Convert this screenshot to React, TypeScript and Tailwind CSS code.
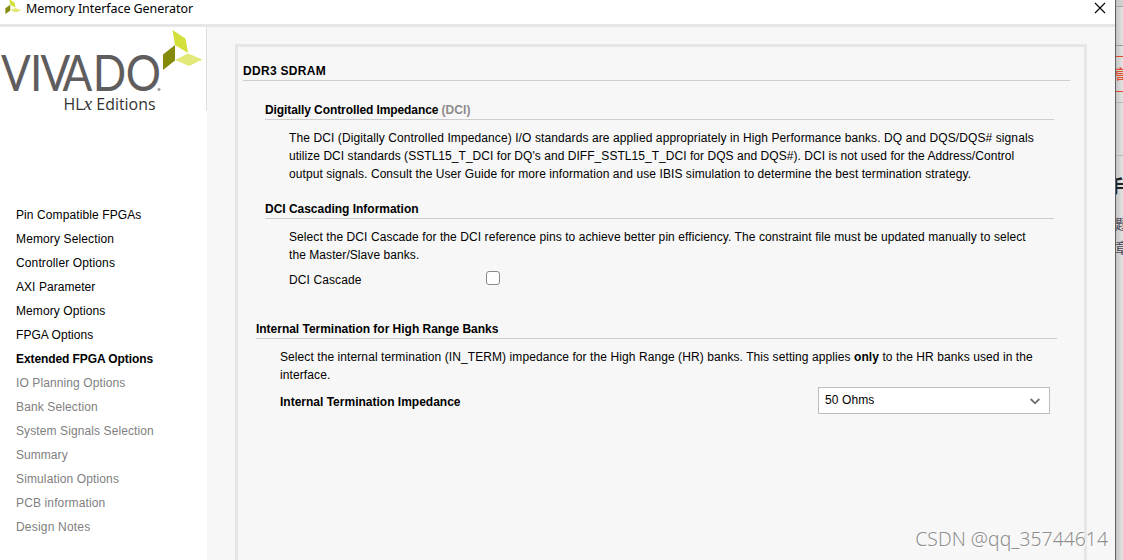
import { ReactNode } from 'react';
import clsx from 'clsx';

const steps = [
  { label: 'Pin Compatible FPGAs', state: 'done', tracking: 'tracking-[0.1px]' },
  { label: 'Memory Selection', state: 'done', tracking: 'tracking-[0.13px]' },
  { label: 'Controller Options', state: 'done', tracking: 'tracking-[0.13px]' },
  { label: 'AXI Parameter', state: 'done', tracking: 'tracking-[0.05px]' },
  { label: 'Memory Options', state: 'done', tracking: 'tracking-[0.1px]' },
  { label: 'FPGA Options', state: 'done', tracking: 'tracking-[0.05px]' },
  { label: 'Extended FPGA Options', state: 'current', tracking: 'tracking-[-0.09px]' },
  { label: 'IO Planning Options', state: 'todo', tracking: 'tracking-[0.1px]' },
  { label: 'Bank Selection', state: 'todo', tracking: 'tracking-[0.13px]' },
  { label: 'System Signals Selection', state: 'todo', tracking: 'tracking-[0.1px]' },
  { label: 'Summary', state: 'todo', tracking: 'tracking-[0.05px]' },
  { label: 'Simulation Options', state: 'todo', tracking: 'tracking-[0.13px]' },
  { label: 'PCB information', state: 'todo', tracking: 'tracking-[0.13px]' },
  { label: 'Design Notes', state: 'todo', tracking: 'tracking-[0.2px]' },
];

// Three-blade mark, used in the title bar and next to the wordmark
const Blades = () => (
  <>
    <path d="M172.5 30 L185.5 38.5 L188 53 L175 45 Z" fill="#d3e03a" />
    <path d="M163 54.5 L175 45 L175 60.5 L163 70 Z" fill="#858a0b" />
    <path d="M175 60 L188 53.5 L202.5 59.5 L189 66 Z" fill="#e2e978" />
  </>
);

const TitleBar = () => (
  <div className="flex h-[27px] shrink-0 items-start border-b-[3px] border-[#e6e6e6] bg-white">
    <svg width="17" height="14" viewBox="162 32 42 38" preserveAspectRatio="none" className="ml-[5px]">
      <Blades />
    </svg>
    <span className="ml-1 font-['Noto_Sans','Open_Sans',sans-serif] text-[12.5px] leading-[18px] tracking-[-0.07px]">
      Memory Interface Generator
    </span>
    <svg width="12" height="12" viewBox="0 0 12 12" className="mt-[2px] mr-[9px] ml-auto" stroke="#000" strokeWidth="1.1">
      <path d="M1 1 L11 11 M11 1 L1 11" />
    </svg>
  </div>
);

const Logo = () => (
  <svg width="206" height="84" viewBox="0 27 206 84" className="block shrink-0">
    <Blades />
    <text x="1.1 34 46 71 105.5 143" y="91" transform="scale(0.88 1)" fontFamily="Lato, sans-serif" fontSize="50" fill="#5f5d5e">
      VIVADO
    </text>
    <circle cx="159" cy="89.5" r="1.2" fill="#b0b0b0" stroke="#8a8a8a" strokeWidth="0.6" />
    <text x="63.5" y="110" fontFamily="'Open Sans', sans-serif" fontSize="15.5" fill="#333" textLength="92" lengthAdjust="spacingAndGlyphs">
      HL<tspan fontFamily="'Liberation Serif', serif" fontStyle="italic" fontSize="19">x</tspan> Editions
    </text>
  </svg>
);

const Sidebar = () => (
  <div className="flex w-[207px] shrink-0 flex-col bg-white">
    <div className="border-r border-[#dedede]">
      <Logo />
    </div>
    <ul className="mt-[92px] ml-4">
      {steps.map((step) => (
        <li
          key={step.label}
          className={clsx(
            'h-6 leading-6 whitespace-nowrap',
            step.tracking,
            step.state === 'current' && 'font-bold',
            step.state === 'todo' && 'text-[#808080]',
          )}
        >
          {step.label}
        </li>
      ))}
    </ul>
  </div>
);

const Heading = ({ children, className }: { children: ReactNode; className?: string }) => (
  <h2 className={clsx('h-5 border-b border-[#cdcdcd] leading-5 font-bold', className)}>{children}</h2>
);

const Line = ({ children, className }: { children: ReactNode; className?: string }) => (
  <div className={clsx('h-[18px] leading-[18px] whitespace-nowrap', className)}>{children}</div>
);

const Panel = () => (
  <div className="mt-[17px] ml-7 w-[852px] border-[3px] border-b-0 border-[#e6e6e6] pl-[5px]">
    <Heading className="mt-[14px] mr-[14px] tracking-[0.3px]">DDR3 SDRAM</Heading>

    <div className="mt-[19px] ml-[22px] w-[789px]">
      <Heading className="tracking-[-0.09px]">
        Digitally Controlled Impedance <span className="tracking-[0.05px] text-[#8c8c8c]">(DCI)</span>
      </Heading>
      <div className="mt-[9px] ml-6">
        <Line className="tracking-[0.1px]">
          The DCI (Digitally Controlled Impedance) I/O standards are applied appropriately in High Performance banks. DQ and DQS/DQS# signals
        </Line>
        <Line className="tracking-[0.048px]">
          utilize DCI standards (SSTL15_T_DCI for DQ's and DIFF_SSTL15_T_DCI for DQS and DQS#). DCI is not used for the Address/Control
        </Line>
        <Line className="tracking-[0.073px]">
          output signals. Consult the User Guide for more information and use IBIS simulation to determine the best termination strategy.
        </Line>
      </div>
      <Heading className="mt-4 tracking-[-0.02px]">DCI Cascading Information</Heading>
      <div className="mt-[9px] ml-6">
        <Line className="tracking-[0.08px]">
          Select the DCI Cascade for the DCI reference pins to achieve better pin efficiency. The constraint file must be updated manually to select
        </Line>
        <Line className="tracking-[0.07px]">the Master/Slave banks.</Line>
        <div className="mt-[7px] flex h-[18px] items-start">
          <span className="w-[197px] leading-[18px] tracking-[0.1px]">DCI Cascade</span>
          <span className="h-[14px] w-[14px] rounded-[3px] border border-[#8a8a8a] bg-white" />
        </div>
      </div>
    </div>

    <div className="mt-[30px] ml-[13px] w-[801px]">
      <Heading className="tracking-[-0.02px]">Internal Termination for High Range Banks</Heading>
      <div className="mt-[9px] ml-6">
        <Line className="tracking-[0.083px]">
          Select the internal termination (IN_TERM) impedance for the High Range (HR) banks. This setting applies <b>only</b> to the HR banks used in the
        </Line>
        <Line className="tracking-[0.1px]">interface.</Line>
        <div className="mt-[3px] flex items-center">
          <span className="w-[538px] pt-[2px] font-bold">Internal Termination Impedance</span>
          <div className="flex h-[27px] w-[232px] items-center justify-between border border-[#bdbdbd] bg-white pr-[9px] pb-px pl-[6px]">
            <span className="tracking-[0.1px]">50 Ohms</span>
            <svg width="10" height="7" viewBox="0 0 10 7" fill="none" stroke="#6e6e6e" strokeWidth="1.8" className="mt-[3px]">
              <path d="M0.7 1 L5 5.3 L9.3 1" />
            </svg>
          </div>
        </div>
      </div>
    </div>
  </div>
);

// Sliver of the browser page behind the dialog
const PageBehind = () => (
  <div className="flex w-[7px] flex-col overflow-hidden bg-linear-to-r from-[#c4c4c4] to-[#e4e4e4] font-['Noto_Sans_CJK_SC',sans-serif]">
    <div className="h-[7px] shrink-0 border-b border-[#a8a8a8] bg-[#c4c4c4]/50" />
    <div className="h-[39px] shrink-0 border-b border-[#999]" />
    <div className="mt-[10px] h-9 shrink-0 border-y border-[#e0492b] text-[15px] leading-[34px] font-medium text-[#e0522f]">
      <span className="-ml-[3px] block w-5">高</span>
    </div>
    <div className="h-[11px] shrink-0 border-b border-[#b5b5b5]" />
    <div className="h-[53px] shrink-0 border-b border-[#b5b5b5]" />
    <span className="mt-[17px] -ml-[9px] block h-6 w-6 shrink-0 text-[18px] leading-6 font-bold text-[#222]">手</span>
    <span className="mt-[14px] -ml-px block h-6 w-6 shrink-0 text-[14px] leading-6 text-[#444455]">题</span>
    <span className="-ml-px block h-6 w-6 shrink-0 text-[14px] leading-6 text-[#444455]">章</span>
  </div>
);

const App = () => {
  return (
    <div className="relative flex h-[560px] w-[1123px] overflow-hidden bg-[#f7f7f7] font-['Liberation_Sans',Arial,sans-serif] text-[12px] text-black">
      <div className="flex w-[1116px] shrink-0 flex-col border-r border-[#606060]">
        <TitleBar />
        <div className="flex min-h-0 flex-1">
          <Sidebar />
          <Panel />
        </div>
      </div>
      <PageBehind />
      <div className="absolute right-[15px] bottom-[7px] font-['Noto_Sans',sans-serif] text-[19.4px] leading-7 font-light whitespace-nowrap text-[#8f8f8f] [text-shadow:1px_1px_0_#ffffff]">
        CSDN @qq_35744614
      </div>
    </div>
  );
};

export default App;
